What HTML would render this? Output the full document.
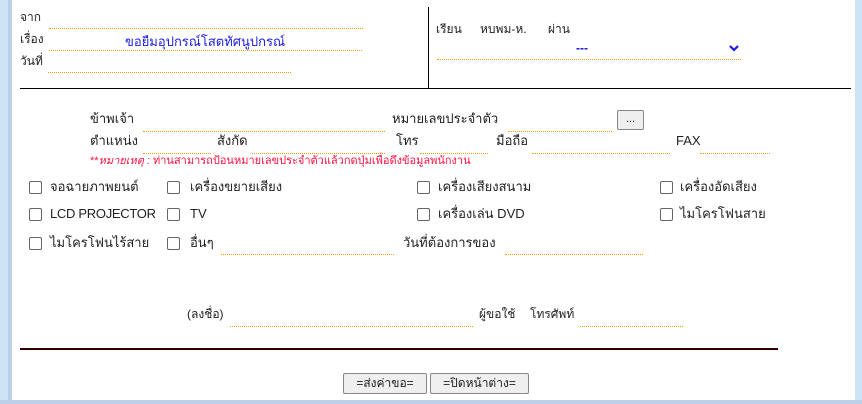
<!DOCTYPE html>
<html><head><meta charset="utf-8"><style>
body{margin:0;width:862px;height:404px;background:#cfe3f7;position:relative;overflow:hidden;font-family:"Liberation Sans",sans-serif;font-size:13px;color:#222}
#p{position:absolute;left:12px;top:0;width:843px;height:400px;background:#fff}
#lb{position:absolute;left:8px;top:0;width:4px;height:404px;background:#b9d0e8}
#bb{position:absolute;left:0;top:400px;width:862px;height:4px;background:#b9d0e8}
.t{position:absolute;white-space:nowrap;line-height:16px}
.d{position:absolute;border-top:1px dotted #f0a000;height:0}
.cb{position:absolute;width:11px;height:11px;border:1px solid #666;border-radius:2px;background:#fff}
.btn{position:absolute;border:1px solid #888;background:#efefef;font-size:12px;text-align:center;line-height:18px;border-radius:2px}
</style></head><body>
<div id="p"></div><div id="lb"></div><div id="bb"></div>
<div class="t" style="left:20px;top:9px;font-size:12px">จาก</div>
<div class="t" style="left:20px;top:31px;font-size:12px">เรื่อง</div>
<div class="t" style="left:20px;top:53px;font-size:12px">วันที่</div>
<div class="d" style="left:49px;top:28px;width:314px"></div>
<div class="d" style="left:49px;top:50px;width:313px"></div>
<div class="d" style="left:48px;top:72px;width:243px"></div>
<div class="t" style="left:125px;top:34px;color:#2020e0;font-size:13px">ขอยืมอุปกรณ์โสตทัศนูปกรณ์</div>
<div style="position:absolute;left:428px;top:7px;width:1px;height:82px;background:#000"></div>
<div style="position:absolute;left:20px;top:88px;width:831px;height:1px;background:#000"></div>
<div class="t" style="left:436px;top:21px;font-size:12px">เรียน</div>
<div class="t" style="left:480px;top:21px;font-size:12px">หบพม-ห.</div>
<div class="t" style="left:548px;top:21px;font-size:12px">ผ่าน</div>
<div class="t" style="left:576px;top:40px;color:#1010d0;font-size:12px;font-weight:bold">---</div>
<svg style="position:absolute;left:729px;top:44px" width="10" height="8"><path d="M1 2 L5 6 L9 2" stroke="#1a1ae0" stroke-width="2.2" fill="none"/></svg>
<div class="d" style="left:437px;top:59px;width:304px"></div>
<div class="t" style="left:90px;top:111px">ข้าพเจ้า</div>
<div class="d" style="left:143px;top:131px;width:242px"></div>
<div class="t" style="left:392px;top:111px">หมายเลขประจำตัว</div>
<div class="d" style="left:508px;top:131px;width:104px"></div>
<div class="btn" style="left:617px;top:110px;width:25px;height:18px;line-height:16px;font-size:11px">...</div>
<div class="t" style="left:90px;top:133px">ตำแหน่ง</div>
<div class="d" style="left:143px;top:153px;width:68px"></div>
<div class="t" style="left:217px;top:133px">สังกัด</div>
<div class="d" style="left:252px;top:153px;width:133px"></div>
<div class="t" style="left:396px;top:133px">โทร</div>
<div class="d" style="left:420px;top:153px;width:68px"></div>
<div class="t" style="left:496px;top:133px">มือถือ</div>
<div class="d" style="left:532px;top:153px;width:138px"></div>
<div class="t" style="left:676px;top:133px">FAX</div>
<div class="d" style="left:700px;top:153px;width:70px"></div>
<div class="t" style="left:90px;top:153px;color:#ff1040;font-size:11px">**<i>หมายเหตุ :</i> ท่านสามารถป้อนหมายเลขประจำตัวแล้วกดปุ่มเพื่อดึงข้อมูลพนักงาน</div>
<div class="cb" style="left:29px;top:181px"></div><div class="t" style="left:50px;top:179px">จอฉายภาพยนต์</div>
<div class="cb" style="left:167px;top:181px"></div><div class="t" style="left:190px;top:179px">เครื่องขยายเสียง</div>
<div class="cb" style="left:417px;top:181px"></div><div class="t" style="left:438px;top:179px">เครื่องเสียงสนาม</div>
<div class="cb" style="left:660px;top:181px"></div><div class="t" style="left:680px;top:179px">เครื่องอัดเสียง</div>
<div class="cb" style="left:29px;top:208px"></div><div class="t" style="left:50px;top:206px;letter-spacing:-0.3px">LCD PROJECTOR</div>
<div class="cb" style="left:167px;top:208px"></div><div class="t" style="left:190px;top:206px">TV</div>
<div class="cb" style="left:417px;top:208px"></div><div class="t" style="left:438px;top:206px">เครื่องเล่น DVD</div>
<div class="cb" style="left:660px;top:208px"></div><div class="t" style="left:680px;top:206px">ไมโครโฟนสาย</div>
<div class="cb" style="left:29px;top:237px"></div><div class="t" style="left:50px;top:235px">ไมโครโฟนไร้สาย</div>
<div class="cb" style="left:167px;top:237px"></div><div class="t" style="left:190px;top:235px">อื่นๆ</div>
<div class="d" style="left:221px;top:254px;width:173px"></div>
<div class="t" style="left:403px;top:235px">วันที่ต้องการของ</div>
<div class="d" style="left:505px;top:254px;width:138px"></div>
<div class="t" style="left:187px;top:306px;font-size:12px">(ลงชื่อ)</div>
<div class="d" style="left:230px;top:326px;width:243px"></div>
<div class="t" style="left:479px;top:306px;font-size:12px">ผู้ขอใช้</div>
<div class="t" style="left:530px;top:306px;font-size:12px">โทรศัพท์</div>
<div class="d" style="left:580px;top:326px;width:103px"></div>
<div style="position:absolute;left:20px;top:348px;width:758px;height:2px;background:#330000"></div>
<div class="btn" style="left:343px;top:373px;width:82px;height:19px">=ส่งค่าขอ=</div>
<div class="btn" style="left:430px;top:373px;width:97px;height:19px">=ปิดหน้าต่าง=</div>
</body></html>
